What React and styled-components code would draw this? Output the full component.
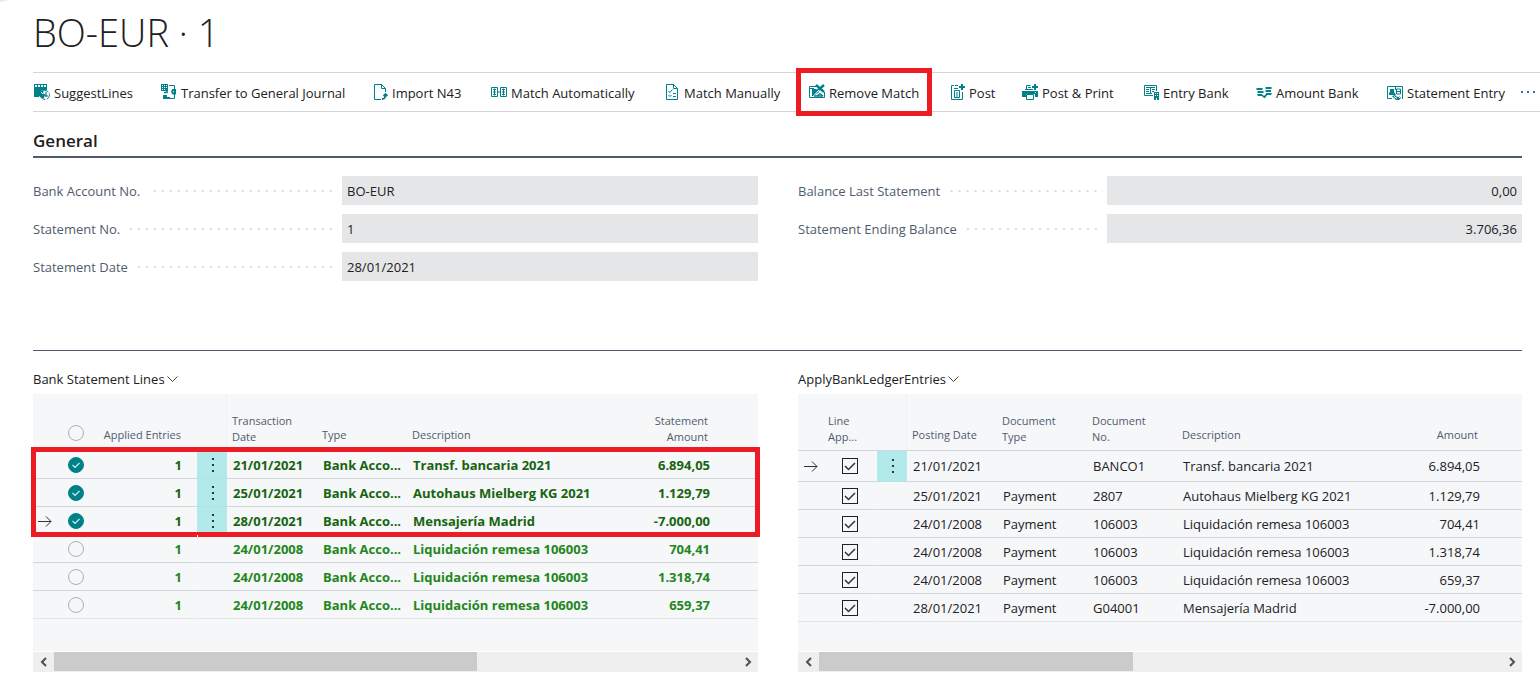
import React, { useState } from 'react';
import styled, { createGlobalStyle, css } from 'styled-components';

const color = {
  text: '#212121',
  label: '#505c6d',
  teal: '#008089',
  line: '#d2d5d9',
  faint: '#e3e5e8',
  panel: '#f5f7f9',
  field: '#e5e6e8',
  mark: '#ed1c24',
};

const GlobalStyle = createGlobalStyle`
  *, *::before, *::after { box-sizing: border-box; }
  body {
    margin: 0;
    background: #fff;
    color: ${color.text};
    font-family: "Open Sans", "Noto Sans", sans-serif;
    font-size: 13px;
    line-height: 20px;
  }
  button, input { font: inherit; color: inherit; }
`;

const Page = styled.main`
  position: relative;
  overflow: hidden;
  padding: 8px 0 4px 33px;
`;

const Corner = styled.span`
  position: absolute;
  left: -14px;
  top: -26px;
  width: 28px;
  height: 28px;
  border-radius: 50%;
  background: #d5eff3;
`;

const Title = styled.h1`
  margin: 0;
  font-size: 38px;
  line-height: 48px;
  font-weight: 300;
`;

const Toolbar = styled.nav`
  display: grid;
  grid-template-columns: 127fr 211fr 119fr 173fr 145fr 140fr 73fr 121fr 113fr 131fr 134fr 20fr;
  align-items: center;
  height: 40px;
  margin-top: 16px;
  border: solid ${color.line};
  border-width: 1px 0;
`;

const Action = styled.button`
  position: relative;
  display: flex;
  align-items: center;
  justify-self: start;
  gap: 4px;
  height: 38px;
  padding: 2px 0 0 1px;
  border: 0;
  background: none;
  white-space: nowrap;
  svg { flex: none; margin-bottom: 2px; }
  ${(p) => p.$marked && css`
    &::after {
      content: '';
      position: absolute;
      inset: -5px -13px -5px -12px;
      border: 5px solid ${color.mark};
    }
  `}
`;

const More = styled(Action)`
  color: #2b6cb8;
`;

const Sections = styled.div`
  padding-right: 18px;
`;

const Heading = styled.h2`
  margin: 17px 0 0;
  padding-bottom: 3px;
  border-bottom: 2px solid ${color.label};
  font-size: 17px;
  line-height: 24px;
  font-weight: 600;
`;

const Columns = styled.div`
  display: grid;
  grid-template-columns: minmax(0, 725fr) minmax(0, 724fr);
  column-gap: 40px;
`;

const FieldGroups = styled(Columns)`
  padding: 18px 0 69px;
  border-bottom: 1px solid ${color.label};
`;

const FieldGroup = styled.div`
  display: flex;
  flex-direction: column;
  gap: 9px;
`;

const FieldRow = styled.div`
  display: grid;
  grid-template-columns: 309fr 416fr;
  height: 29px;
`;

const FieldLabel = styled.label`
  display: flex;
  align-items: center;
  color: ${color.label};
  &::after {
    content: '';
    flex: 1;
    height: 2px;
    margin: 0 4px 0 8px;
    background: linear-gradient(90deg, #dcdddf 2px, transparent 2px) right / 8px 2px repeat-x;
  }
`;

const FieldInput = styled.input`
  width: 100%;
  min-width: 0;
  border: 0;
  padding: 0 5px;
  background: ${color.field};
  text-align: ${(p) => (p.$numeric ? 'right' : 'left')};
`;

const PartTitle = styled.button`
  display: flex;
  align-items: center;
  gap: 2px;
  height: 20px;
  margin: 18px 0 5px;
  padding: 0;
  border: 0;
  background: none;
`;

const Part = styled.section`
  display: flex;
  flex-direction: column;
`;

const TableArea = styled.div`
  flex: 1;
  min-height: 257px;
  background: ${color.panel};
`;

const Table = styled.table`
  width: 100%;
  table-layout: fixed;
  border-collapse: separate;
  border-spacing: 0;
`;

const HeadCell = styled.th`
  height: 57px;
  padding: 0 5px ${(p) => p.$bottom || 7}px;
  border-bottom: 1px solid ${color.line};
  vertical-align: bottom;
  font-size: 11px;
  line-height: 16px;
  font-weight: 400;
  color: ${color.label};
  text-align: ${(p) => p.$align || 'left'};
  padding-right: ${(p) => p.$end || 5}px;
  ${(p) => p.$edge && css`border-right: 1px solid #eff1f4;`}
`;

const Body = styled.tbody`
  position: relative;
  font-weight: ${(p) => (p.$bold ? 700 : 400)};
  color: ${(p) => p.$tone || color.text};
  ${(p) => p.$marked && css`
    &::after {
      content: '';
      position: absolute;
      inset: -4px -2px -2px;
      border: 5px solid ${color.mark};
      pointer-events: none;
    }
  `}
  ${(p) => p.$last && css`
    tr:last-child td { border-bottom-color: ${color.faint}; }
  `}
`;

const Cell = styled.td`
  height: ${(p) => (p.$tall ? 31 : 28)}px;
  padding: 0 6px;
  border-bottom: 1px solid ${color.line};
  white-space: nowrap;
  overflow: hidden;
  text-overflow: ellipsis;
  text-align: ${(p) => p.$align || 'left'};
  padding-right: ${(p) => p.$end || 5}px;
`;

const IconCell = styled(Cell)`
  padding: 0;
  text-align: center;
  color: ${color.text};
  svg { display: block; margin: 0 auto; }
`;

const MenuCell = styled(IconCell)`
  background: ${(p) => (p.$on ? '#b2eaec' : 'none')};
  border-left: 1px solid ${(p) => (p.$on ? '#b2eaec' : color.panel)};
  ${(p) => p.$on && css`border-bottom-color: #b9dfe3;`}
`;

const MenuButton = styled.button`
  display: block;
  width: 100%;
  padding: 0;
  border: 0;
  background: none;
`;

const Tick = styled.span`
  display: grid;
  width: 16px;
  height: 16px;
  margin: 0 auto;
  > * { grid-area: 1 / 1; }
  svg { pointer-events: none; visibility: hidden; }
  input:checked + svg { visibility: visible; }
`;

const TickInput = styled.input`
  appearance: none;
  width: 16px;
  height: 16px;
  margin: 0;
  border: 1px solid ${(p) => (p.$round ? '#a9b0bb' : '#212121')};
  border-radius: ${(p) => (p.$round ? '50%' : 0)};
  ${(p) => p.$round && css`
    &:checked { background: ${color.teal}; border-color: ${color.teal}; }
  `}
`;

const Scrollbar = styled.div`
  display: flex;
  height: 20px;
  margin-top: 1px;
  background: #efefef;
`;

const ScrollButton = styled.button`
  display: grid;
  place-items: center;
  width: 21px;
  padding: 0;
  border: 0;
  background: none;
`;

const Track = styled.div`
  flex: 1;
`;

const Thumb = styled.div`
  width: ${(p) => p.$size}%;
  height: 19px;
  background: #cbcbcb;
`;

const Icon = ({ children }) => (
  <svg width="16" height="16" viewBox="0 0 16 16" fill="none" stroke={color.teal} aria-hidden="true">
    {children}
  </svg>
);
const T = color.teal;

const icons = {
  suggest: (
    <Icon>
      <path d="M0 0h13v6H8l-3 3v4H0z" fill={T} stroke="none" />
      <path d="M1 1h2v2H1zM4 1h2v2H4zM7 1h2v2H7zM10 1h2v2h-2z" fill="#fff" stroke="none" />
      <circle cx="11" cy="11" r="4.5" fill="#fff" strokeDasharray="5 1.5" />
      <path d="M4 10c1-3 3-4 6-4l-1 3 2 2-1 3C7 15 5 12 4 10z" fill={T} stroke="none" />
      <path d="M12 8v5M10 11l4 1M6 9l3 3" strokeWidth="1.2" />
      <path d="M7 8l2 2" stroke="#fff" />
    </Icon>
  ),
  transfer: (
    <Icon>
      <path d="M0 0h7v7H0z" fill={T} stroke="none" />
      <path d="M1 1h1v1H1zM3 1h1v1H3zM5 1h1v1H5zM1 3h1v1H1zM3 3h1v1H3zM5 3h1v1H5zM1 5h1v1H1zM3 5h1v1H3z" fill="#fff" stroke="none" />
      <path d="M8 1.500h5.500V5M13.500 10v4.500H8" />
      <path d="M2 11h4v2h3v2H2z" fill={T} stroke="none" />
      <path d="M3 8.500h3.500M6 6v3" strokeWidth="1.600" />
      <path d="M15 6h-3a1.500 2 0 000 3.500h2V5.500" strokeWidth="2" />
    </Icon>
  ),
  import: (
    <Icon>
      <path d="M9 15.500H2.500V.5h7l4 4V8M9.500.5v4h4" />
      <path d="M10 15c2.500 0 3.500-1 3.500-5M11.500 12L13.500 10l2 2" strokeWidth="1.800" />
    </Icon>
  ),
  auto: (
    <Icon>
      <path d="M.5 3.500h6v9h-6zM9.500 3.500h6v9h-6z" />
      <path d="M2 5.500h3M3.500 4.500v7M2 8h3M2 10.500h3M11 5.500h3M12.500 4.500v7M11 8h3M11 10.500h3M6 8h4" />
    </Icon>
  ),
  manual: (
    <Icon>
      <path d="M2.500.5h7l4 4v11h-11zM9.500.5v4h4" />
      <path d="M4.500 7l1.300 1.500L8.500 5.500M4.500 11l1.500 1.500L7.500 11M9 9.500h3M9 12.500h3" />
    </Icon>
  ),
  remove: (
    <Icon>
      <path d="M7 2.500H.5v11h15V8M.5 4.500H5" />
      <path d="M3 12V5h4l3 3-5 4z" fill={T} stroke="none" />
      <path d="M7 1l8 7M15 1L7 8" strokeWidth="2.400" />
      <path d="M4 12.500L10 6" stroke="#fff" />
      <path d="M8 12l3-2.500 3 2.500M5 12h9" strokeWidth="1.300" />
    </Icon>
  ),
  post: (
    <Icon>
      <path d="M5 1.500H2.500v14h11V8M6 1.500h3" />
      <path d="M5.500 13.500v-7h5v7zM8 8v5M5 4.500h4" />
      <path d="M13 0v6M10 3h6" strokeWidth="2" />
    </Icon>
  ),
  print: (
    <Icon>
      <path d="M0 7h16v6h-3v-3H4v3H0z" fill={T} stroke="none" />
      <path d="M4.500 6V1.500h4M6 3.500h3M3 5.500h8" />
      <path d="M4.500 10.500h7v5h-7z" fill="#fff" />
      <path d="M13 0v6M10 3h6" strokeWidth="2" />
      <path d="M13 8h1v1h-1z" fill="#fff" stroke="none" />
    </Icon>
  ),
  entry: (
    <Icon>
      <path d="M10 11.500H1.500v-10h12V7" />
      <path d="M3 3.500h9M3 5.500h3M9 5.500h3M3 7.500h3M9 7.500h2M3 9.500h6M7.500 4v6" />
      <path d="M11 8h5v8h-2v-2h-1v2h-2z" fill={T} stroke="none" />
      <path d="M12 9h1v1h-1zM14 9h1v1h-1zM12 11h1v1h-1zM14 11h1v1h-1z" fill="#fff" stroke="none" />
    </Icon>
  ),
  amount: (
    <Icon>
      <g fill={T} stroke="none">
        <path d="M1 4h5l1 1-1 1H1L0 5zM2 7h5l1 1-1 1H2L1 8zM1 10h5l1 2H2zM10 3h5l1 1-1 1h-5L9 4zM10 6h5v2h-5L9 7zM10 9h6l-1 2h-5z" />
        <path d="M5 11h2l1 1 2-2h2l-3 4H8z" />
      </g>
    </Icon>
  ),
  statement: (
    <Icon>
      <path d="M5 14.500H.5v-12h15V15M8.500 2v4" />
      <path d="M3 5h4v3l2 3H2V9l1-1z" fill={T} stroke="none" />
      <path d="M9.500 5v5h4V5zM9 7.500h5" />
      <path d="M5 12l3-1 2 2 2-1 2 2-2 2H9z" fill={T} stroke="none" />
      <path d="M7 12.500l3 2M11 12l2 2" stroke="#fff" />
    </Icon>
  ),
};

const actions = [
  ['suggest', 'SuggestLines'],
  ['transfer', 'Transfer to General Journal'],
  ['import', 'Import N43'],
  ['auto', 'Match Automatically'],
  ['manual', 'Match Manually'],
  ['remove', 'Remove Match', true],
  ['post', 'Post'],
  ['print', 'Post & Print'],
  ['entry', 'Entry Bank'],
  ['amount', 'Amount Bank'],
  ['statement', 'Statement Entry'],
];

const Dots = ({ vertical, fill }) => (
  <svg width={vertical ? 4 : 16} height={vertical ? 16 : 4} viewBox={vertical ? '0 0 4 16' : '0 0 16 4'} fill={fill} aria-hidden="true">
    {vertical
      ? <path d="M1 1h2v2H1zM1 7h2v2H1zM1 13h2v2H1z" />
      : <path d="M0 1h2v2H0zM6 1h2v2H6zM12 1h2v2h-2z" />}
  </svg>
);

const Arrow = () => (
  <svg width="14" height="12" viewBox="0 0 14 12" fill="none" stroke="#333" aria-label="Current row">
    <path d="M0 6.500h13M8 1.500l5 5-5 5" />
  </svg>
);

const Chevron = () => (
  <svg width="11" height="8" viewBox="0 0 11 8" fill="none" stroke="#444" aria-hidden="true">
    <path d="M.5 1.500l5 5 5-5" />
  </svg>
);

function Check({ label, round, checked: initial }) {
  const [checked, setChecked] = useState(Boolean(initial));
  return (
    <Tick>
      <TickInput
        type="checkbox"
        aria-label={label}
        $round={round}
        checked={checked}
        onChange={(e) => setChecked(e.target.checked)}
      />
      <svg width="16" height="16" viewBox="0 0 16 16" fill="none" stroke={round ? '#cdeef0' : '#333'} aria-hidden="true">
        <path d={round ? 'M4.500 8l2.500 2.500L11.500 6' : 'M3 8l3.500 3.500L13 5'} strokeWidth={round ? 1.200 : 1.500} />
      </svg>
    </Tick>
  );
}

function Field({ id, label, value, numeric }) {
  return (
    <FieldRow>
      <FieldLabel htmlFor={id}>{label}</FieldLabel>
      <FieldInput id={id} value={value} readOnly $numeric={numeric} />
    </FieldRow>
  );
}

function Scroll({ size }) {
  return (
    <Scrollbar>
      <ScrollButton aria-label="Scroll left">
        <svg width="10" height="10" viewBox="0 0 10 10" fill="none" stroke="#505050" strokeWidth="2"><path d="M7 1L3 5l4 4" /></svg>
      </ScrollButton>
      <Track><Thumb $size={size} /></Track>
      <ScrollButton aria-label="Scroll right">
        <svg width="10" height="10" viewBox="0 0 10 10" fill="none" stroke="#505050" strokeWidth="2"><path d="M3 1l4 4-4 4" /></svg>
      </ScrollButton>
    </Scrollbar>
  );
}

const Cols = ({ widths }) => (
  <colgroup>
    {widths.map((w, i) => <col key={i} width={w} />)}
  </colgroup>
);

const matched = [
  { date: '21/01/2021', text: 'Transf. bancaria 2021', amount: '6.894,05' },
  { date: '25/01/2021', text: 'Autohaus Mielberg KG 2021', amount: '1.129,79' },
  { date: '28/01/2021', text: 'Mensajería Madrid', amount: '-7.000,00', current: true },
];

const remaining = [
  { date: '24/01/2008', text: 'Liquidación remesa 106003', amount: '704,41' },
  { date: '24/01/2008', text: 'Liquidación remesa 106003', amount: '1.318,74' },
  { date: '24/01/2008', text: 'Liquidación remesa 106003', amount: '659,37' },
];

const ledger = [
  ['21/01/2021', '', 'BANCO1', 'Transf. bancaria 2021', '6.894,05'],
  ['25/01/2021', 'Payment', '2807', 'Autohaus Mielberg KG 2021', '1.129,79'],
  ['24/01/2008', 'Payment', '106003', 'Liquidación remesa 106003', '704,41'],
  ['24/01/2008', 'Payment', '106003', 'Liquidación remesa 106003', '1.318,74'],
  ['24/01/2008', 'Payment', '106003', 'Liquidación remesa 106003', '659,37'],
  ['28/01/2021', 'Payment', 'G04001', 'Mensajería Madrid', '-7.000,00'],
];

function StatementRow({ row, selected }) {
  return (
    <tr>
      <IconCell>{row.current && <Arrow />}</IconCell>
      <IconCell><Check round checked={selected} label={`Select ${row.text}`} /></IconCell>
      <Cell $align="right" $end={15}>1</Cell>
      <MenuCell $on={selected}>
        {selected && <MenuButton aria-label="Row options"><Dots vertical fill="#333" /></MenuButton>}
      </MenuCell>
      <Cell>{row.date}</Cell>
      <Cell>Bank Acco...</Cell>
      <Cell>{row.text}</Cell>
      <Cell $align="right">{row.amount}</Cell>
      <Cell />
    </tr>
  );
}

export default function App() {
  return (
    <>
      <GlobalStyle />
      <Page>
        <Corner />
        <Title>BO-EUR · 1</Title>
        <Toolbar>
          {actions.map(([icon, label, marked]) => (
            <Action key={label} $marked={marked}>{icons[icon]}{label}</Action>
          ))}
          <More aria-label="More actions"><Dots fill="#2b6cb8" /></More>
        </Toolbar>
        <Sections>
          <Heading>General</Heading>
          <FieldGroups>
            <FieldGroup>
              <Field id="account" label="Bank Account No." value="BO-EUR" />
              <Field id="number" label="Statement No." value="1" />
              <Field id="date" label="Statement Date" value="28/01/2021" />
            </FieldGroup>
            <FieldGroup>
              <Field id="last" label="Balance Last Statement" value="0,00" numeric />
              <Field id="ending" label="Statement Ending Balance" value="3.706,36" numeric />
            </FieldGroup>
          </FieldGroups>
          <Columns>
            <Part>
              <PartTitle>Bank Statement Lines<Chevron /></PartTitle>
              <TableArea>
                <Table>
                  <Cols widths={[24, 38, 102, 30, 90, 90, undefined, 90, 43]} />
                  <thead>
                    <tr>
                      <HeadCell />
                      <HeadCell $bottom={9}><Check round label="Select all" /></HeadCell>
                      <HeadCell $align="right" $end={16}>Applied Entries</HeadCell>
                      <HeadCell $edge />
                      <HeadCell $bottom={5}>Transaction<br />Date</HeadCell>
                      <HeadCell>Type</HeadCell>
                      <HeadCell>Description</HeadCell>
                      <HeadCell $bottom={5} $align="right" $end={7}>Statement<br />Amount</HeadCell>
                      <HeadCell />
                    </tr>
                  </thead>
                  <Body $bold $marked $tone="#17640f">
                    {matched.map((row) => <StatementRow key={row.text} row={row} selected />)}
                  </Body>
                  <Body $bold $last $tone="#23861b">
                    {remaining.map((row) => <StatementRow key={row.amount} row={row} />)}
                  </Body>
                </Table>
              </TableArea>
              <Scroll size={62} />
            </Part>
            <Part>
              <PartTitle>ApplyBankLedgerEntries<Chevron /></PartTitle>
              <TableArea>
                <Table>
                  <Cols widths={[25, 54, 30, 90, 90, 90, undefined, 90, 37]} />
                  <thead>
                    <tr>
                      <HeadCell />
                      <HeadCell $bottom={5}>Line<br />App...</HeadCell>
                      <HeadCell $edge />
                      <HeadCell>Posting Date</HeadCell>
                      <HeadCell $bottom={5}>Document<br />Type</HeadCell>
                      <HeadCell $bottom={5}>Document<br />No.</HeadCell>
                      <HeadCell>Description</HeadCell>
                      <HeadCell $align="right" $end={7}>Amount</HeadCell>
                      <HeadCell />
                    </tr>
                  </thead>
                  <Body $last>
                    {ledger.map(([date, type, no, text, amount], i) => (
                      <tr key={amount}>
                        <IconCell $tall={i === 0}>{i === 0 && <Arrow />}</IconCell>
                        <IconCell><Check checked label={`Line applied ${text}`} /></IconCell>
                        <MenuCell $on={i === 0}>
                          {i === 0 && <MenuButton aria-label="Row options"><Dots vertical fill="#333" /></MenuButton>}
                        </MenuCell>
                        <Cell>{date}</Cell>
                        <Cell>{type}</Cell>
                        <Cell>{no}</Cell>
                        <Cell>{text}</Cell>
                        <Cell $align="right">{amount}</Cell>
                        <Cell />
                      </tr>
                    ))}
                  </Body>
                </Table>
              </TableArea>
              <Scroll size={46} />
            </Part>
          </Columns>
        </Sections>
      </Page>
    </>
  );
}
